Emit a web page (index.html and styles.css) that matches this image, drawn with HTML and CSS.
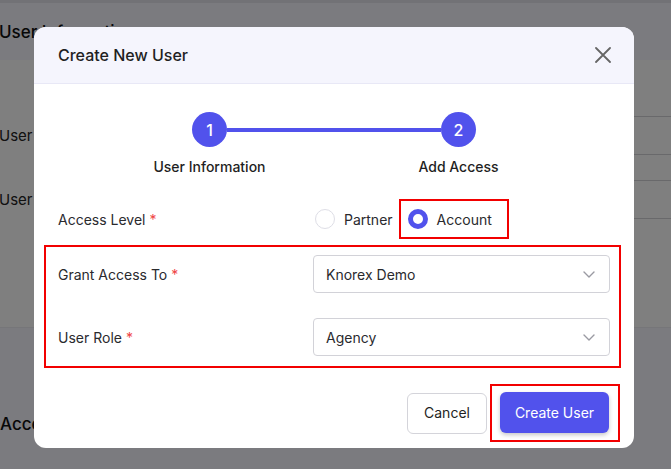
FILE: index.html
```html
<!DOCTYPE html>
<html lang="en">
<head>
<meta charset="utf-8">
<title>Create New User</title>
<link rel="stylesheet" href="styles.css">
</head>
<body>
<div class="page">
  <div class="topbar"></div>
  <div class="section-head">User Information</div>
  <div class="panel">
    <div class="panel-row">
      <span class="panel-label">User Name</span>
      <span class="panel-input"></span>
    </div>
    <div class="panel-row">
      <span class="panel-label">User Email</span>
      <span class="panel-input"></span>
    </div>
  </div>
  <div class="section-foot">Access Information</div>
</div>

<div class="backdrop">
  <div class="modal" role="dialog" aria-labelledby="modal-title">
    <div class="modal-header">
      <h2 class="modal-title" id="modal-title">Create New User</h2>
      <button class="close-btn" aria-label="Close">
        <svg width="16" height="16" viewBox="0 0 16 16"><path d="M1 1 L15 15 M15 1 L1 15" stroke="#666" stroke-width="1.8" stroke-linecap="round" fill="none"/></svg>
      </button>
    </div>

    <div class="modal-body">
      <div class="stepper-track">
        <span class="step-dot">1</span>
        <span class="step-line"></span>
        <span class="step-dot">2</span>
      </div>
      <div class="step-labels">
        <span class="step-label">User Information</span>
        <span class="step-label">Add Access</span>
      </div>

      <div class="form-row access-row">
        <span class="field-label">Access Level <span class="req">*</span></span>
        <div class="radio-group">
          <label class="radio-opt">
            <span class="radio"></span>
            <span>Partner</span>
          </label>
          <label class="radio-opt highlight">
            <span class="radio checked"></span>
            <span>Account</span>
          </label>
        </div>
      </div>

      <div class="field-block highlight">
        <div class="form-row">
          <span class="field-label">Grant Access To <span class="req">*</span></span>
          <div class="select">
            <span>Knorex Demo</span>
            <svg class="chev" width="12" height="7" viewBox="0 0 12 7"><path d="M1 1 L6 6 L11 1" stroke="#9a9aa2" stroke-width="1.4" fill="none" stroke-linecap="round" stroke-linejoin="round"/></svg>
          </div>
        </div>
        <div class="form-row">
          <span class="field-label">User Role <span class="req">*</span></span>
          <div class="select">
            <span>Agency</span>
            <svg class="chev" width="12" height="7" viewBox="0 0 12 7"><path d="M1 1 L6 6 L11 1" stroke="#9a9aa2" stroke-width="1.4" fill="none" stroke-linecap="round" stroke-linejoin="round"/></svg>
          </div>
        </div>
      </div>

      <div class="modal-footer">
        <button class="btn btn-cancel">Cancel</button>
        <div class="submit-wrap highlight">
          <button class="btn btn-primary">Create User</button>
        </div>
      </div>
    </div>
  </div>
</div>
</body>
</html>
```

FILE: styles.css
```css
* { box-sizing: border-box; }

html, body {
  margin: 0;
  padding: 0;
  height: 100%;
}

body {
  font-family: Inter, "Noto Sans", sans-serif;
  color: #1f1f23;
  background: #f6f6fe;
  overflow: hidden;
}

/* underlying page */
.page {
  width: 100%;
  height: 100%;
}

.topbar {
  height: 3px;
  background: #e4e4ec;
}

.section-head {
  height: 57px;
  display: flex;
  align-items: center;
  margin-left: -1px;
  font-size: 17px;
  font-weight: 500;
  color: #111;
}

.panel {
  height: 268px;
  background: #fff;
  padding-top: 56px;
  display: flex;
  flex-direction: column;
  gap: 25px;
  border-bottom: 1px solid #ececf2;
}

.panel-row {
  height: 39px;
  display: flex;
  align-items: center;
  justify-content: space-between;
}

.panel-label {
  font-size: 15px;
  color: #222;
  margin-left: -1px;
}

.panel-input {
  width: 380px;
  height: 39px;
  border-top: 1px solid #d2d2d6;
  border-bottom: 1px solid #d2d2d6;
}

.section-foot {
  height: 140px;
  display: flex;
  align-items: center;
  padding-top: 52px;
  font-size: 17px;
  font-weight: 500;
  color: #111;
}

/* dialog layer */
.backdrop {
  position: fixed;
  inset: 0;
  background: rgba(0, 0, 0, 0.5);
  display: flex;
  align-items: flex-start;
  justify-content: flex-start;
  padding: 27px 0 0 34px;
}

.modal {
  width: 600px;
  background: #fff;
  border-radius: 12px;
  overflow: hidden;
}

.modal-header {
  height: 57px;
  background: #f5f5fd;
  border-bottom: 1px solid #e8e8f6;
  display: flex;
  align-items: center;
  justify-content: space-between;
  padding: 0 23px 0 24px;
}

.modal-title {
  margin: 0;
  font-size: 16px;
  font-weight: 500;
  color: #1f1f23;
}

.close-btn {
  border: 0;
  background: none;
  padding: 0;
  width: 16px;
  height: 16px;
  display: flex;
}

.modal-body {
  padding: 28px 24px 6px;
}

/* stepper */
.stepper-track {
  width: 284px;
  margin: 0 auto;
  display: flex;
  align-items: center;
}

.step-dot {
  width: 35px;
  height: 35px;
  border-radius: 50%;
  background: #5152ec;
  color: #fff;
  font-size: 16px;
  font-weight: 500;
  display: flex;
  align-items: center;
  justify-content: center;
  flex: none;
}

.step-line {
  flex: 1;
  height: 4px;
  background: #5152ec;
}

.step-labels {
  display: flex;
  justify-content: center;
  gap: 99px;
  margin-top: 10px;
}

.step-label {
  width: 150px;
  text-align: center;
  font-size: 14px;
  font-weight: 500;
  line-height: 20px;
  color: #1f1f23;
}

/* form */
.form-row {
  display: grid;
  grid-template-columns: 255px 1fr;
  align-items: center;
}

.field-label {
  font-size: 14px;
  color: #2a2a2e;
}

.req {
  color: #ef4444;
}

.access-row {
  margin-top: 22px;
  height: 40px;
}

.highlight {
  border: 2px solid #f20000;
}

.radio-group {
  display: flex;
  align-items: center;
  margin-left: 2px;
}

.radio-opt {
  display: flex;
  align-items: center;
  gap: 9px;
  font-size: 14px;
  color: #2a2a2e;
}

.radio-opt.highlight {
  height: 40px;
  margin-left: 6px;
  padding: 0 15px 0 7px;
}

.radio {
  width: 20px;
  height: 20px;
  border-radius: 50%;
  border: 1.5px solid #dedee6;
  background: #fff;
}

.radio.checked {
  border: 5px solid #5152ec;
}

.field-block {
  margin: 6px -11px 0 -14px;
  padding: 8px 9px 10px 12px;
  display: flex;
  flex-direction: column;
  gap: 25px;
}

.select {
  height: 38px;
  border: 1px solid #d2d2d8;
  border-radius: 4px;
  display: flex;
  align-items: center;
  justify-content: space-between;
  padding: 0 14px 0 12px;
  font-size: 14px;
  color: #2a2a2e;
}

/* footer */
.modal-footer {
  margin: 16px -10px 0 0;
  display: flex;
  justify-content: flex-end;
  align-items: center;
}

.btn {
  height: 41px;
  border-radius: 6px;
  font-family: inherit;
  font-size: 14px;
  line-height: 1;
  padding: 0;
  cursor: pointer;
}

.btn-cancel {
  width: 80px;
  background: #fff;
  border: 1px solid #d4d4da;
  color: #1f1f23;
}

.submit-wrap {
  margin-left: 3px;
  padding: 6px 9px 7px 8px;
}

.btn-primary {
  width: 109px;
  border: 0;
  background: #5152ec;
  color: #fff;
  box-shadow: 0 2px 4px rgba(0, 0, 0, 0.22);
}
```
